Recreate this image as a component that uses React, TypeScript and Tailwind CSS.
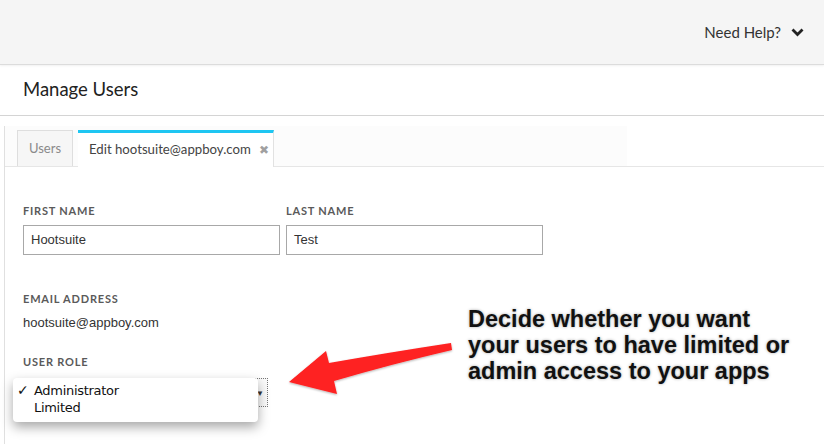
import React from "react";

const Label = ({ children }: { children: React.ReactNode }) => (
  <div className="text-[11px] leading-[14px] font-bold tracking-[0.8px] text-[#5a5a5a] uppercase" style={{ fontFamily: "Lato, sans-serif" }}>
    {children}
  </div>
);

export default function App() {
  return (
    <div className="w-[824px] h-[444px] overflow-hidden bg-white relative" style={{ fontFamily: "Lato, sans-serif" }}>
      {/* Header */}
      <div className="h-[65px] bg-[#f5f5f5] border-b border-[#dcdcdc] shadow-[0_1px_2px_rgba(0,0,0,0.06)] flex items-center justify-end pr-[20px]">
        <span className="text-[15px] text-[#333] mr-[10px]">Need Help?</span>
        <svg width="13" height="9" viewBox="0 0 13 9" className="mt-[1px]">
          <path d="M1.5 1.5 L6.5 6.5 L11.5 1.5" fill="none" stroke="#222" strokeWidth="2.8" />
        </svg>
      </div>
      {/* Title */}
      <div className="h-[51px] border-b border-[#d4d4d4] flex items-center pl-[23px]">
        <span className="text-[18.5px] text-[#222] pb-[1px]">Manage Users</span>
      </div>
      {/* Panel */}
      <div className="ml-[4px] mt-[10px] border-l border-[#e0e0e0] h-[330px]">
        <div className="border-b border-[#e6e6e6] flex">
          <div className="w-[622px] h-[40px] bg-[#fcfcfc] flex items-end pl-[12px]">
            <div className="h-[36px] w-[56px] border border-b-0 border-[#dedede] bg-[#f6f6f6] flex items-center justify-center text-[13px] text-[#8a8a8a]">
              Users
            </div>
            <div className="ml-[5px] h-[37px] w-[196px] bg-white border-t-[3px] border-[#1ec6f2] border-r border-r-[#e2e2e2] flex items-center pl-[11px] text-[13.2px] text-[#444] -mb-px">
              <span>Edit hootsuite@appboy.com</span>
              <span className="ml-[8px] text-[12px] text-[#a0a0a0]">✖</span>
            </div>
          </div>
        </div>
        <div className="pl-[18px] pt-[37px]">
          <div className="flex gap-[6px]">
            <div className="flex flex-col gap-[7px]">
              <Label>First Name</Label>
              <div className="w-[257px] h-[30px] border border-[#a8a8a8] flex items-center pl-[7px] text-[13px] text-[#333]" style={{ fontFamily: '"Liberation Sans", Arial, sans-serif' }}>
                Hootsuite
              </div>
            </div>
            <div className="flex flex-col gap-[7px]">
              <Label>Last Name</Label>
              <div className="w-[257px] h-[30px] border border-[#a8a8a8] flex items-center pl-[7px] text-[13px] text-[#333]" style={{ fontFamily: '"Liberation Sans", Arial, sans-serif' }}>
                Test
              </div>
            </div>
          </div>
          <div className="mt-[37px]">
            <Label>Email Address</Label>
            <div className="mt-[9px] text-[13px] leading-[16px] text-[#333]" style={{ fontFamily: '"Liberation Sans", Arial, sans-serif' }}>
              hootsuite@appboy.com
            </div>
          </div>
          <div className="mt-[24px]">
            <Label>User Role</Label>
            <div className="relative mt-[9px] w-[245px] h-[29px] border border-dotted border-[#777] bg-[#fafafa]">
              <span className="absolute right-[3px] top-[8px] text-[8px] text-[#333]">▼</span>
              <div
                className="absolute left-[-11px] top-[-1px] w-[245px] h-[44px] bg-white rounded-[4px] shadow-[0_5px_12px_rgba(0,0,0,0.35)] text-[13px] text-[#111] pt-[4px]"
                style={{ fontFamily: '"DejaVu Sans", sans-serif' }}
              >
                <div className="flex h-[17px] items-center">
                  <span className="w-[21px] pl-[4px] text-[14px] font-bold">✓</span>
                  <span className="tracking-[-0.3px]">Administrator</span>
                </div>
                <div className="flex h-[17px] items-center">
                  <span className="w-[21px]"></span>
                  <span className="tracking-[-0.3px]">Limited</span>
                </div>
              </div>
            </div>
          </div>
        </div>
      </div>
      {/* Annotation arrow */}
      <svg className="absolute left-0 top-0 pointer-events-none" width="824" height="444" viewBox="0 0 824 444">
        <defs>
          <filter id="sh" x="-20%" y="-20%" width="140%" height="140%">
            <feDropShadow dx="0" dy="1" stdDeviation="1" floodColor="#000" floodOpacity="0.3" />
          </filter>
        </defs>
        <path
          d="M289 382 L326 351 L329 363 Q392 352 451 343 L452 350 Q392 364 334 381 L337 394 Z"
          fill="#fe2020"
          filter="url(#sh)"
        />
      </svg>
      <div
        className="absolute left-[468px] top-[306px] text-[23.5px] leading-[26px] font-bold text-[#111] [text-shadow:0_0_3px_rgba(0,0,0,0.35)] whitespace-nowrap"
        style={{ fontFamily: '"Liberation Sans", Arial, sans-serif' }}
      >
        Decide whether you want
        <br />
        your users to have limited or
        <br />
        admin access to your apps
      </div>
    </div>
  );
}
